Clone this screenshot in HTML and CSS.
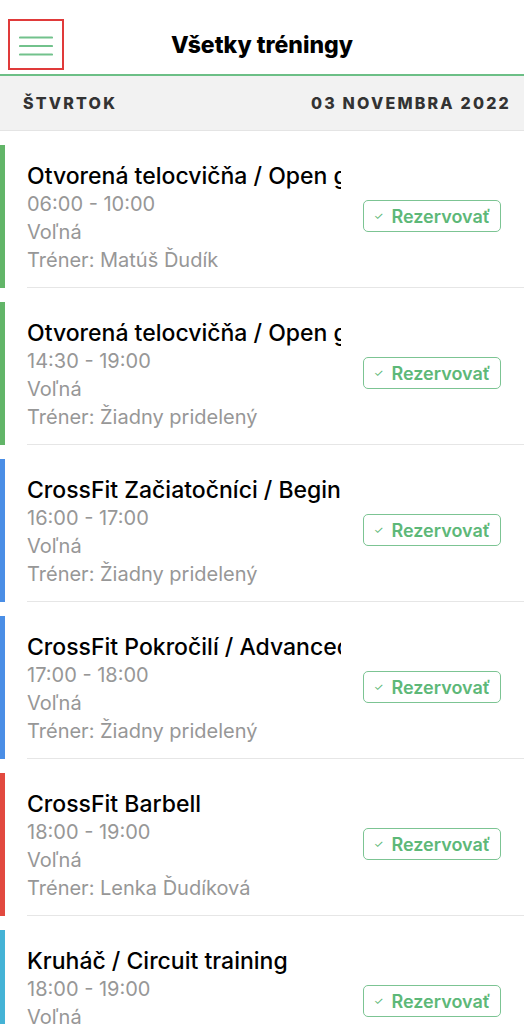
FILE: index.html
```html
<!DOCTYPE html>
<html lang="sk">
<head>
    <meta charset="UTF-8">
    <meta name="viewport" content="width=device-width, initial-scale=1.0">
    <title>Všetky tréningy</title>
    <link rel="stylesheet" href="styles.css">
</head>
<body>
    <header class="topbar">
        <button class="menu-btn" aria-label="Menu">
            <svg width="34" height="20" viewBox="0 0 34 20">
                <path d="M1 1.5 H33 M1 10 H33 M1 18.5 H33" stroke="#72c28c" stroke-width="2.2" stroke-linecap="round"/>
            </svg>
        </button>
        <h1 class="title">Všetky tréningy</h1>
    </header>

    <div class="day">
        <span>ŠTVRTOK</span>
        <span>03 NOVEMBRA 2022</span>
    </div>

    <main class="list">
        <div class="item">
            <div class="session green">
                <div class="body">
                    <div class="info">
                        <p class="name">Otvorená telocvičňa / Open gym</p>
                        <p class="meta">06:00 - 10:00</p>
                        <p class="meta">Voľná</p>
                        <p class="meta">Tréner: Matúš Ďudík</p>
                    </div>
                    <button class="book"><span class="tick">✓</span> Rezervovať</button>
                </div>
            </div>
        </div>
        <div class="item">
            <div class="session green">
                <div class="body">
                    <div class="info">
                        <p class="name">Otvorená telocvičňa / Open gym</p>
                        <p class="meta">14:30 - 19:00</p>
                        <p class="meta">Voľná</p>
                        <p class="meta">Tréner: Žiadny pridelený</p>
                    </div>
                    <button class="book"><span class="tick">✓</span> Rezervovať</button>
                </div>
            </div>
        </div>
        <div class="item">
            <div class="session blue">
                <div class="body">
                    <div class="info">
                        <p class="name">CrossFit Začiatočníci / Beginners</p>
                        <p class="meta">16:00 - 17:00</p>
                        <p class="meta">Voľná</p>
                        <p class="meta">Tréner: Žiadny pridelený</p>
                    </div>
                    <button class="book"><span class="tick">✓</span> Rezervovať</button>
                </div>
            </div>
        </div>
        <div class="item">
            <div class="session blue">
                <div class="body">
                    <div class="info">
                        <p class="name">CrossFit Pokročilí / Advanced</p>
                        <p class="meta">17:00 - 18:00</p>
                        <p class="meta">Voľná</p>
                        <p class="meta">Tréner: Žiadny pridelený</p>
                    </div>
                    <button class="book"><span class="tick">✓</span> Rezervovať</button>
                </div>
            </div>
        </div>
        <div class="item">
            <div class="session red">
                <div class="body">
                    <div class="info">
                        <p class="name">CrossFit Barbell</p>
                        <p class="meta">18:00 - 19:00</p>
                        <p class="meta">Voľná</p>
                        <p class="meta">Tréner: Lenka Ďudíková</p>
                    </div>
                    <button class="book"><span class="tick">✓</span> Rezervovať</button>
                </div>
            </div>
        </div>
        <div class="item">
            <div class="session cyan">
                <div class="body">
                    <div class="info">
                        <p class="name">Kruháč / Circuit training</p>
                        <p class="meta">18:00 - 19:00</p>
                        <p class="meta">Voľná</p>
                        <p class="meta">Tréner: Žiadny pridelený</p>
                    </div>
                    <button class="book"><span class="tick">✓</span> Rezervovať</button>
                </div>
            </div>
        </div>
    </main>
</body>
</html>
```

FILE: styles.css
```css
*{
    margin: 0;
    padding: 0;
    box-sizing: border-box;
}
body{
    background-color: #fff;
    font-family: Inter, "Noto Sans", sans-serif;
    color: #111;
    overflow: hidden;
}
.topbar{
    height: 76px;
    display: flex;
    align-items: flex-start;
    border-bottom: 2px solid #6cbf86;
    padding: 19px 0 0 8px;
    position: relative;
}
.menu-btn{
    width: 56px;
    height: 51px;
    border: 2px solid #e03a3a;
    background: none;
    display: flex;
    align-items: center;
    justify-content: center;
    padding-top: 3px;
}
.title{
    position: absolute;
    left: 0;
    right: 0;
    top: 31px;
    text-align: center;
    font-size: 23px;
    font-weight: 800;
    color: #000;
    pointer-events: none;
}
.day{
    height: 55px;
    background-color: #f2f2f2;
    border-bottom: 1px solid #e4e4e4;
    display: flex;
    justify-content: space-between;
    align-items: center;
    padding: 0 13px 0 23px;
    font-size: 16px;
    font-weight: 800;
    letter-spacing: 2.2px;
    color: #333;
}
.item{
    padding-top: 14px;
}
.session{
    border-left: 5px solid #62b568;
    height: 143px;
}
.session.blue{ border-left-color: #4a8ee6; }
.session.red{ border-left-color: #e2493f; }
.session.cyan{ border-left-color: #45b3d6; }
.body{
    margin-left: 22px;
    height: 100%;
    border-bottom: 1px solid #e6e6e6;
    display: flex;
    align-items: center;
    padding-right: 23px;
}
.info{
    flex: 1;
    min-width: 0;
    overflow: hidden;
    padding-top: 3px;
}
.name{
    font-size: 23px;
    font-weight: 500;
    line-height: 28px;
    white-space: nowrap;
    overflow: hidden;
    color: #000;
}
.meta{
    font-size: 20px;
    line-height: 28px;
    color: #979797;
    white-space: nowrap;
}
.book{
    margin-left: 22px;
    width: 138px;
    height: 32px;
    flex-shrink: 0;
    border: 1.5px solid #7cc493;
    border-radius: 5px;
    background: #fff;
    color: #5db878;
    font-family: Inter, "Noto Sans", sans-serif;
    font-size: 18px;
    font-weight: 600;
    display: flex;
    align-items: center;
    justify-content: center;
    gap: 8px;
}
.tick{
    font-size: 11px;
    font-weight: 400;
}
```
